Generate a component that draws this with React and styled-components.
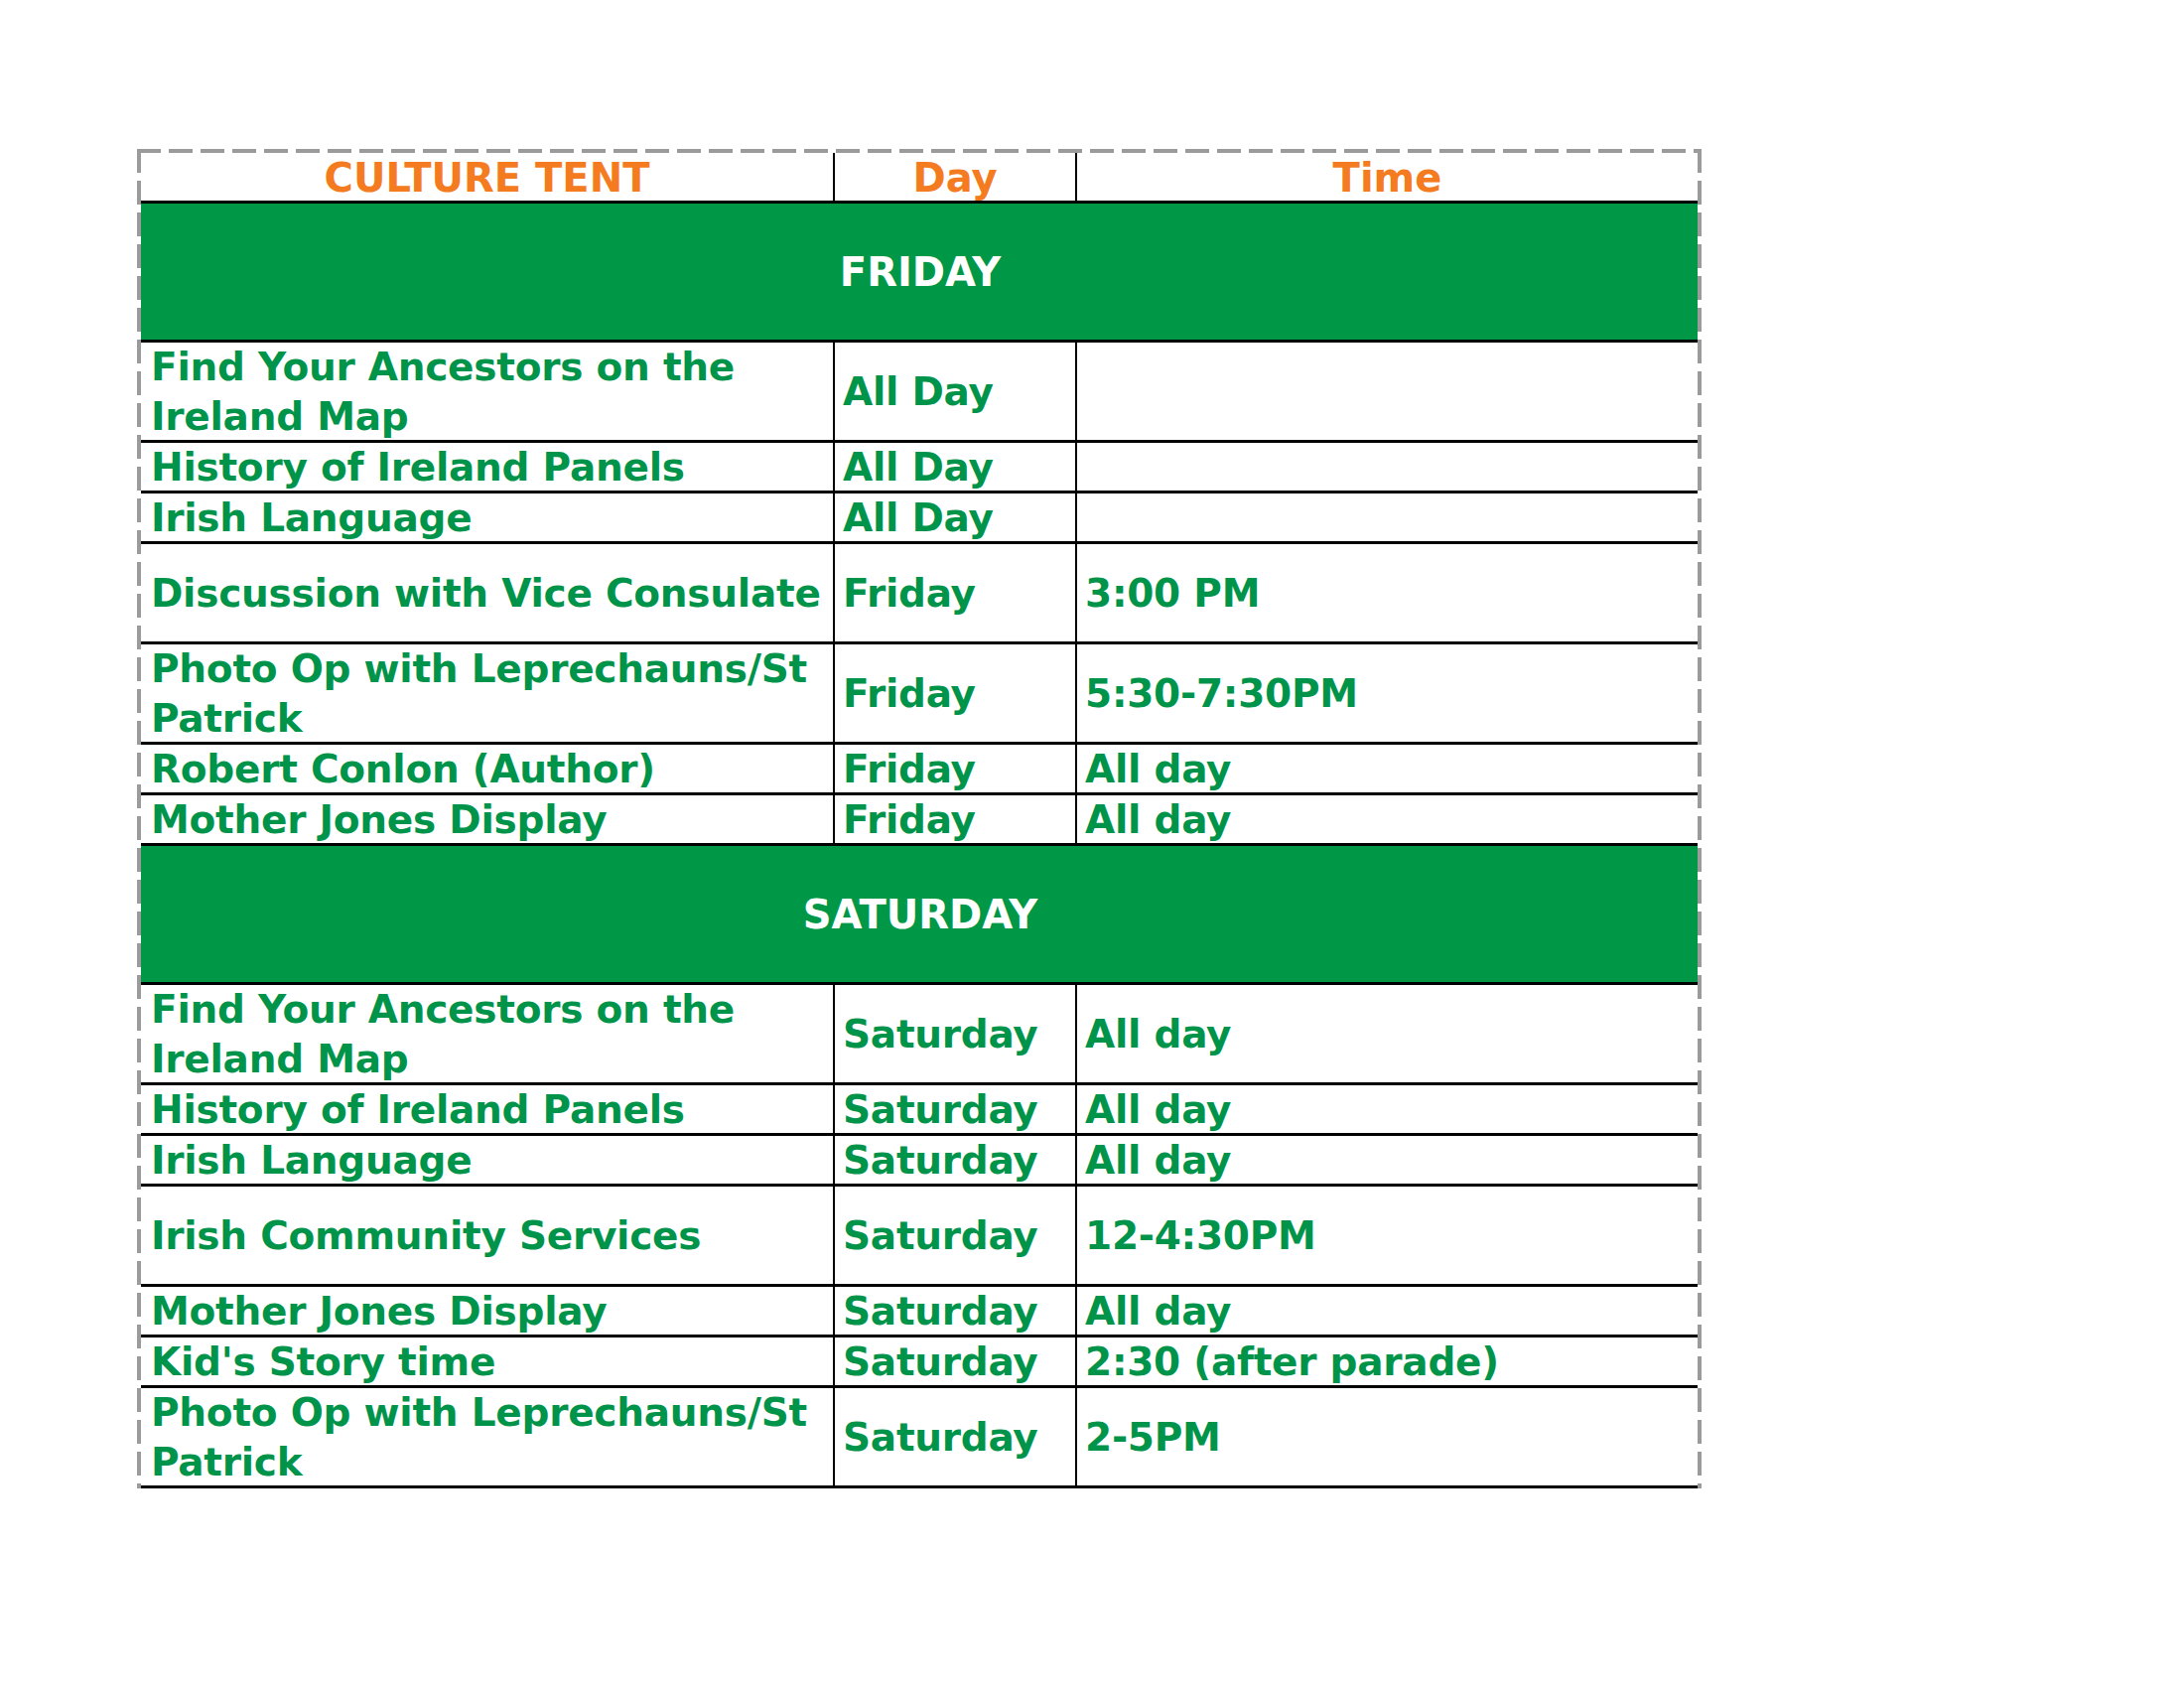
import styled, { createGlobalStyle } from "styled-components";

const GlobalStyle = createGlobalStyle`
  *, *::before, *::after {
    box-sizing: border-box;
  }
  body {
    margin: 0;
    background: #ffffff;
    font-family: "DejaVu Sans", Verdana, sans-serif;
  }
`;

const Page = styled.div`
  padding: 150px 0 200px 138px;
`;

// dashed frame drawn with gradients so the dashes are long like the printout
const Frame = styled.div`
  width: 1576px;
  padding: 4px 4px 0 4px;
  background:
    repeating-linear-gradient(to right, #9b9b9b 0 24px, transparent 24px 32px) left top / 100% 4px no-repeat,
    repeating-linear-gradient(to bottom, #9b9b9b 0 24px, transparent 24px 32px) left top / 4px 100% no-repeat,
    repeating-linear-gradient(to bottom, #9b9b9b 0 24px, transparent 24px 32px) right top / 4px 100% no-repeat;
`;

const Table = styled.div`
  font-weight: bold;
  font-size: 39px;
`;

const Row = styled.div`
  display: grid;
  grid-template-columns: 697px 244px 1fr;
  height: ${(p) => p.$h}px;
  border-top: ${(p) => (p.$first ? "none" : "3px solid #000")};
  border-bottom: ${(p) => (p.$last ? "3px solid #000" : "none")};
`;

const HeadCell = styled.div`
  display: flex;
  align-items: center;
  justify-content: center;
  font-size: 40px;
  color: #f47b20;
  border-left: ${(p) => (p.$divider ? "2px solid #000" : "none")};
  padding-top: 2px;
`;

const Cell = styled.div`
  display: flex;
  align-items: center;
  min-height: 0;
  padding-left: ${(p) => (p.$divider ? "8px" : "10px")};
  padding-top: 2px;
  color: #00944a;
  line-height: 46px;
  letter-spacing: -0.25px;
  white-space: nowrap;
  border-left: ${(p) => (p.$divider ? "2px solid #000" : "none")};

  & > div > div + div {
    margin-top: 4px;
  }
`;

const Band = styled.div`
  height: 140px;
  border-top: 3px solid #000;
  background: #009846;
  color: #ffffff;
  font-size: 40px;
  display: flex;
  align-items: center;
  justify-content: center;
  padding-left: 2px;
`;

const friday = [
  { what: ["Find Your Ancestors on the", "Ireland Map"], day: "All Day", time: "", h: 101 },
  { what: ["History of Ireland Panels"], day: "All Day", time: "", h: 51 },
  { what: ["Irish Language"], day: "All Day", time: "", h: 51 },
  { what: ["Discussion with Vice Consulate"], day: "Friday", time: "3:00 PM", h: 101 },
  { what: ["Photo Op with Leprechauns/St", "Patrick"], day: "Friday", time: "5:30-7:30PM", h: 101 },
  { what: ["Robert Conlon (Author)"], day: "Friday", time: "All day", h: 51 },
  { what: ["Mother Jones Display"], day: "Friday", time: "All day", h: 51 },
];

const saturday = [
  { what: ["Find Your Ancestors on the", "Ireland Map"], day: "Saturday", time: "All day", h: 101 },
  { what: ["History of Ireland Panels"], day: "Saturday", time: "All day", h: 51 },
  { what: ["Irish Language"], day: "Saturday", time: "All day", h: 51 },
  { what: ["Irish Community Services"], day: "Saturday", time: "12-4:30PM", h: 101 },
  { what: ["Mother Jones Display"], day: "Saturday", time: "All day", h: 51 },
  { what: ["Kid's Story time"], day: "Saturday", time: "2:30 (after parade)", h: 51 },
  { what: ["Photo Op with Leprechauns/St", "Patrick"], day: "Saturday", time: "2-5PM", h: 104 },
];

const EventRow = ({ item, last }) => (
  <Row $h={item.h} $last={last}>
    <Cell>
      <div>
        {item.what.map((line) => (
          <div key={line}>{line}</div>
        ))}
      </div>
    </Cell>
    <Cell $divider>{item.day}</Cell>
    <Cell $divider>{item.time}</Cell>
  </Row>
);

const App = () => (
  <Page>
    <GlobalStyle />
    <Frame>
      <Table>
        <Row $h={48} $first>
          <HeadCell>CULTURE TENT</HeadCell>
          <HeadCell $divider>Day</HeadCell>
          <HeadCell $divider>Time</HeadCell>
        </Row>
        <Band>FRIDAY</Band>
        {friday.map((item, i) => (
          <EventRow key={"f" + i} item={item} />
        ))}
        <Band>SATURDAY</Band>
        {saturday.map((item, i) => (
          <EventRow key={"s" + i} item={item} last={i === saturday.length - 1} />
        ))}
      </Table>
    </Frame>
  </Page>
);

export default App;
